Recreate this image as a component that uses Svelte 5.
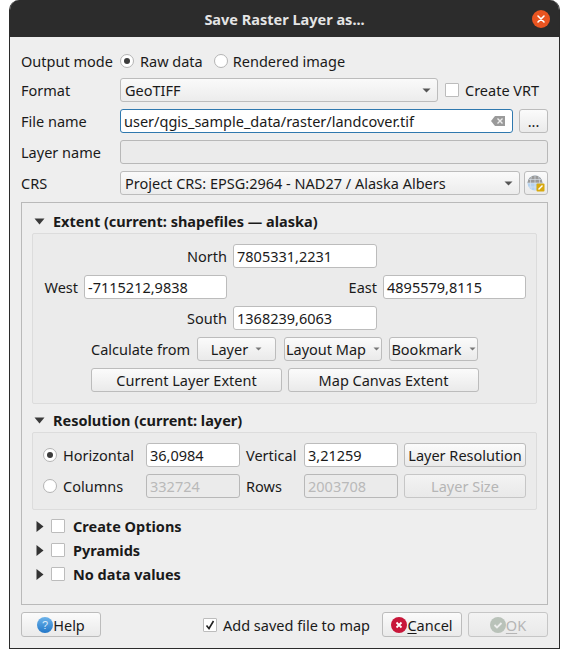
<script>
  let outputMode = $state('raw');
  let resMode = $state('res');
</script>

{#snippet arrowDown()}
  <svg class="arrow" width="11" height="7" viewBox="0 0 11 7"><path d="M0.500 0.500h10L5.500 6.500z" fill="#3a3a3a" /></svg>
{/snippet}

{#snippet arrowRight()}
  <svg class="arrow-r" width="8" height="11" viewBox="0 0 8 11"><path d="M0.500 0v11L7.500 5.500z" fill="#333" /></svg>
{/snippet}

{#snippet caret()}
  <svg class="caret" width="9" height="5" viewBox="0 0 9 5"><path d="M0.500 0.500h8L4.500 4.500z" fill="#555" /></svg>
{/snippet}

{#snippet smallCaret()}
  <svg class="caret" width="7" height="4" viewBox="0 0 7 4"><path d="M0.500 0.500h6L3.500 3.500z" fill="#777" /></svg>
{/snippet}

<div class="win">
  <header class="titlebar">
    <span class="title">Save Raster Layer as...</span>
    <svg class="close" width="18" height="18" viewBox="0 0 18 18">
      <circle cx="9" cy="9" r="9" fill="#e95420" />
      <path d="M6 6l6 6M12 6l-6 6" stroke="#fff" stroke-width="1.600" stroke-linecap="round" />
    </svg>
  </header>

  <main class="body">
    <div class="form">
      <div class="mode-row">
        <span class="lbl">Output mode</span>
        <button class="radio-item" onclick={() => (outputMode = 'raw')}>
          <span class="radio" class:on={outputMode === 'raw'}></span>Raw data
        </button>
        <button class="radio-item" onclick={() => (outputMode = 'img')}>
          <span class="radio" class:on={outputMode === 'img'}></span>Rendered image
        </button>
      </div>

      <div class="row">
        <span class="lbl">Format</span>
        <div class="combo format">GeoTIFF {@render caret()}</div>
        <span class="check-item vrt"><span class="check"></span>Create VRT</span>
      </div>

      <div class="row">
        <span class="lbl">File name</span>
        <div class="input focus grow">
          <span>user/qgis_sample_data/raster/landcover.tif</span>
          <svg class="clear" width="14" height="10" viewBox="0 0 14 10">
            <path d="M4 0h10v10H4L0 5z" fill="#9a9a9a" />
            <path d="M6.500 2.500l5 5M11.500 2.500l-5 5" stroke="#eee" stroke-width="1.400" />
          </svg>
        </div>
        <button class="btn dots">...</button>
      </div>

      <div class="row">
        <span class="lbl">Layer name</span>
        <div class="input disabled grow"></div>
      </div>

      <div class="row">
        <span class="lbl">CRS</span>
        <div class="combo grow">Project CRS: EPSG:2964 - NAD27 / Alaska Albers {@render caret()}</div>
        <button class="btn crs-btn" aria-label="Select CRS">
          <svg width="18" height="17" viewBox="0 0 18 17">
            <circle cx="8" cy="8" r="7.500" fill="#b5d2ee" />
            <path d="M0.500 8a7.500 7.500 0 0 1 15 0z" fill="#9a9a9a" />
            <path d="M2 4.500h12M0.500 8h15M8 0.500v15M4.500 1.500c-1.500 4-1.500 9 0 13M11.500 1.500c1.500 4 1.500 9 0 13M2 12h12" stroke="#dfe8f0" stroke-width=".6" fill="none" />
            <rect x="9.500" y="8.500" width="8" height="8" rx="1" fill="#d8a90f" />
            <path d="M11.500 14.500l4-4" stroke="#fff" stroke-width="1.500" />
          </svg>
        </button>
      </div>
    </div>

    <section class="frame">
      <div class="head">{@render arrowDown()}<b>Extent (current: shapefiles — alaska)</b></div>
      <div class="group extent">
        <div class="coords">
          <span class="lbl end wide">North</span>
          <div class="input middle">7805331,2231</div>
          <span class="lbl end first">West</span>
          <div class="input">-7115212,9838</div>
          <span class="lbl end">East</span>
          <div class="input">4895579,8115</div>
          <span class="lbl end wide">South</span>
          <div class="input middle">1368239,6063</div>
        </div>
        <div class="calc">
          <span class="lbl calc-l">Calculate from</span>
          <button class="btn w-layer">Layer {@render smallCaret()}</button>
          <button class="btn w-map">Layout Map {@render smallCaret()}</button>
          <button class="btn w-book">Bookmark {@render smallCaret()}</button>
        </div>
        <div class="calc two">
          <button class="btn">Current Layer Extent</button>
          <button class="btn">Map Canvas Extent</button>
        </div>
      </div>

      <div class="head second">{@render arrowDown()}<b>Resolution (current: layer)</b></div>
      <div class="group res">
        <button class="radio-item" onclick={() => (resMode = 'res')}>
          <span class="radio" class:on={resMode === 'res'}></span>Horizontal
        </button>
        <div class="input">36,0984</div>
        <span class="lbl">Vertical</span>
        <div class="input">3,21259</div>
        <button class="btn">Layer Resolution</button>

        <button class="radio-item" onclick={() => (resMode = 'size')}>
          <span class="radio" class:on={resMode === 'size'}></span>Columns
        </button>
        <div class="input disabled dim">332724</div>
        <span class="lbl">Rows</span>
        <div class="input disabled dim">2003708</div>
        <button class="btn off">Layer Size</button>
      </div>

      <div class="collapsed">
        {#each ['Create Options', 'Pyramids', 'No data values'] as name}
          <div class="col-row">{@render arrowRight()}<span class="check"></span><b>{name}</b></div>
        {/each}
      </div>
    </section>

    <footer class="foot">
      <button class="btn act help">
        <svg width="16" height="16" viewBox="0 0 16 16">
          <defs>
            <linearGradient id="hb" x1="0" y1="0" x2="0" y2="1"><stop offset="0" stop-color="#6db3ea" /><stop offset="1" stop-color="#2277c8" /></linearGradient>
          </defs>
          <circle cx="8" cy="8" r="8" fill="url(#hb)" />
          <text x="8" y="12" text-anchor="middle" font-size="11" fill="#dcecfa" font-family="Liberation Sans">?</text>
        </svg>Help
      </button>
      <span class="check-item add"><span class="check tick">
        <svg width="10" height="10" viewBox="0 0 10 10"><path d="M1.500 5.500L4 8.500 8.500 1" stroke="#222" stroke-width="1.600" fill="none" /></svg>
      </span>Add saved file to map</span>
      <button class="btn act cancel">
        <svg width="16" height="16" viewBox="0 0 16 16">
          <circle cx="8" cy="8" r="8" fill="#c8173a" />
          <path d="M5.500 5.500l5 5M10.500 5.500l-5 5" stroke="#fff" stroke-width="1.800" />
        </svg><span><u>C</u>ancel</span>
      </button>
      <button class="btn act off">
        <svg width="16" height="16" viewBox="0 0 16 16">
          <circle cx="8" cy="8" r="8" fill="#b9c2b9" />
          <path d="M4.500 8l2.500 2.500 4.500-4.500" stroke="#eee" stroke-width="1.800" fill="none" />
        </svg><span><u>O</u>K</span>
      </button>
    </footer>
  </main>
</div>

<style>
  :global(body) {
    background: #fff;
    font-family: "Noto Sans", sans-serif;
    font-size: 14.5px;
    color: #1a1a1a;
  }

  .win {
    width: 551px;
    height: 649px;
    margin-left: 9px;
    box-sizing: border-box;
    display: flex;
    flex-direction: column;
    background: #eeeeee;
    border: 1px solid #2b2b2b;
    border-top: 0;
    border-radius: 10px 10px 0 0;
    overflow: hidden;
  }

  .titlebar {
    height: 37px;
    flex-shrink: 0;
    position: relative;
    display: flex;
    align-items: center;
    justify-content: center;
    background: #2c2c2c;
  }
  .title { color: #e4e4e4; font-weight: 700; }
  .close { position: absolute; right: 9px; top: 10px; }

  .body {
    flex: 1;
    display: flex;
    flex-direction: column;
    padding: 12px 11px 11px;
    gap: 7px;
  }

  .form { display: flex; flex-direction: column; gap: 7px; }
  .row { display: flex; align-items: center; height: 24px; }
  .mode-row { display: flex; align-items: center; height: 22px; padding-top: 2px; box-sizing: border-box; }
  .row > .lbl, .mode-row > .lbl { width: 99px; flex-shrink: 0; }
  .grow { flex: 1; }

  button {
    font: inherit;
    color: inherit;
    cursor: default;
  }

  .radio-item {
    display: flex;
    align-items: center;
    gap: 6px;
    padding: 0;
    border: 0;
    background: none;
  }
  .mode-row .radio-item { margin-right: 11px; }
  .mode-row .radio-item:last-child { gap: 5px; }
  .radio {
    width: 14px;
    height: 14px;
    box-sizing: border-box;
    border: 1px solid #b4b4b4;
    border-radius: 50%;
    background: #fff;
    display: inline-flex;
    align-items: center;
    justify-content: center;
  }
  .radio.on::after {
    content: '';
    width: 6px;
    height: 6px;
    border-radius: 50%;
    background: #3c3c3c;
  }

  .input {
    height: 24px;
    box-sizing: border-box;
    display: flex;
    align-items: center;
    justify-content: space-between;
    padding: 0 3px;
    background: #fff;
    border: 1px solid #bcbcbc;
    border-radius: 3px;
    min-width: 0;
  }
  .input.focus { border-color: #2f78ae; padding-right: 7px; }
  .input.disabled { background: #ebebeb; border-color: #b8b8b8; }
  .input.dim { color: #b9b9b9; }

  .combo {
    height: 24px;
    box-sizing: border-box;
    display: flex;
    align-items: center;
    justify-content: space-between;
    padding: 0 6px 0 4px;
    background: linear-gradient(#fafafa, #ececec);
    border: 1px solid #bcbcbc;
    border-radius: 3px;
  }
  .format { width: 318px; }

  .btn {
    height: 24px;
    box-sizing: border-box;
    display: flex;
    align-items: center;
    justify-content: center;
    padding: 0;
    background: linear-gradient(#fbfbfb, #eaeaea);
    border: 1px solid #bcbcbc;
    border-radius: 3px;
    white-space: nowrap;
  }
  .btn.off { color: #b5b5b5; background: linear-gradient(#f3f3f3, #e9e9e9); border-color: #c6c6c6; }

  .check-item { display: flex; align-items: center; gap: 6px; }
  .vrt { margin-left: 7px; }
  .check {
    width: 14px;
    height: 14px;
    box-sizing: border-box;
    background: #fff;
    border: 1px solid #bcbcbc;
    border-radius: 1px;
    display: inline-flex;
    align-items: center;
    justify-content: center;
    flex-shrink: 0;
  }

  .dots { width: 29px; margin-left: 6px; }
  .crs-btn { width: 24px; margin-left: 4px; }

  .frame {
    flex: 1;
    display: flex;
    flex-direction: column;
    box-sizing: border-box;
    padding: 6px 10px 0;
    border: 1px solid #b9b9b9;
  }
  .head { height: 24px; flex-shrink: 0; display: flex; align-items: center; gap: 8px; padding-left: 2px; }
  .head.second { margin-top: 4px; }

  .group {
    box-sizing: border-box;
    padding: 10px;
    background: #ebebeb;
    border: 1px solid #dcdcdc;
    border-radius: 2px;
  }
  .extent { display: flex; flex-direction: column; gap: 7px; padding-bottom: 11px; }
  .coords {
    display: grid;
    grid-template-columns: 35px 143px 144px 143px;
    gap: 7px 6px;
  }
  .lbl.end { text-align: right; align-self: center; white-space: nowrap; }
  .wide { grid-column: 1 / 3; }
  .middle { grid-column: 3; }
  .first { grid-column: 1; }

  .calc { display: flex; align-items: center; gap: 7px; padding-left: 48px; }
  .calc .btn { gap: 7px; }
  .calc-l { width: 99px; white-space: nowrap; }
  .w-layer { width: 79px; }
  .w-map { width: 98px; margin-left: 1px; }
  .w-book { width: 89px; }
  .two { gap: 6px; }
  .two .btn { width: 191px; }

  .res {
    display: grid;
    grid-template-columns: 97px 94px 52px 94px 122px;
    gap: 7px 6px;
    align-items: center;
    padding-bottom: 11px;
  }

  .collapsed { display: flex; flex-direction: column; margin-top: 4px; }
  .col-row { height: 24px; display: flex; align-items: center; padding-left: 4px; }
  .col-row .check { margin-left: 7px; margin-right: 8px; }

  .foot { height: 25px; flex-shrink: 0; display: flex; align-items: center; }
  .act { width: 80px; height: 25px; gap: 0; }
  .help { margin-right: 102px; }
  .cancel { margin-left: auto; }
  .foot .act + .act { margin-left: 6px; }
  u { text-underline-offset: 2px; }
</style>
